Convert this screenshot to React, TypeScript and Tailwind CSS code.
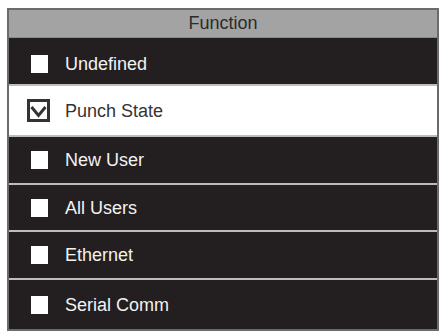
import { useState } from "react"

interface FunctionOption {
  id: string
  label: string
}

const options: FunctionOption[] = [
  { id: "undefined", label: "Undefined" },
  { id: "punch", label: "Punch State" },
  { id: "newuser", label: "New User" },
  { id: "allusers", label: "All Users" },
  { id: "ethernet", label: "Ethernet" },
  { id: "serial", label: "Serial Comm" },
]

// row heights include the 2px divider at the bottom
const rowHeights = ["h-[48px] pt-[5px]", "h-[51px]", "h-[48px]", "h-[47px]", "h-[48px]", "flex-1"]

export default function App() {
  const [selected, setSelected] = useState("punch")

  return (
    <div
      className="w-[443px] h-[332px] bg-white pl-[7px] pt-[8px]"
      style={{ fontFamily: '"Liberation Sans", Arial, sans-serif' }}
    >
      <div className="w-[432px] h-[323px] border-2 border-[#6b6b6b] flex flex-col bg-[#231f20]">
        <div className="h-[28px] shrink-0 bg-[#a3a3a3] flex items-center justify-center text-[18px] text-[#2b2b2b] border-b border-[#8a8a8a]">
          Function
        </div>
        {options.map((opt, i) => {
          const active = opt.id === selected
          const last = i === options.length - 1
          return (
            <div
              key={opt.id}
              onClick={() => setSelected(opt.id)}
              className={`${rowHeights[i]} shrink-0 flex items-center cursor-pointer ${
                last ? "" : "border-b-2 border-[#bdbdbd]"
              } ${active ? "bg-white text-[#333333]" : "bg-[#231f20] text-[#f2f2f2]"}`}
            >
              <div className="w-[56px] flex items-center justify-center pl-[4px]">
                {active ? <CheckedBox /> : <div className="w-[17px] h-[18px] bg-white" />}
              </div>
              <span className="text-[18px] leading-none">{opt.label}</span>
            </div>
          )
        })}
      </div>
    </div>
  )
}

function CheckedBox() {
  return (
    <svg width="23" height="23" viewBox="0 0 23 23" className="ml-[-2px]">
      <rect x="1.5" y="1.5" width="20" height="20" fill="white" stroke="#333" strokeWidth="3" />
      <polyline points="4.5,8 11.5,16.5 18.5,8" fill="none" stroke="#333" strokeWidth="3" strokeLinejoin="miter" />
    </svg>
  )
}
